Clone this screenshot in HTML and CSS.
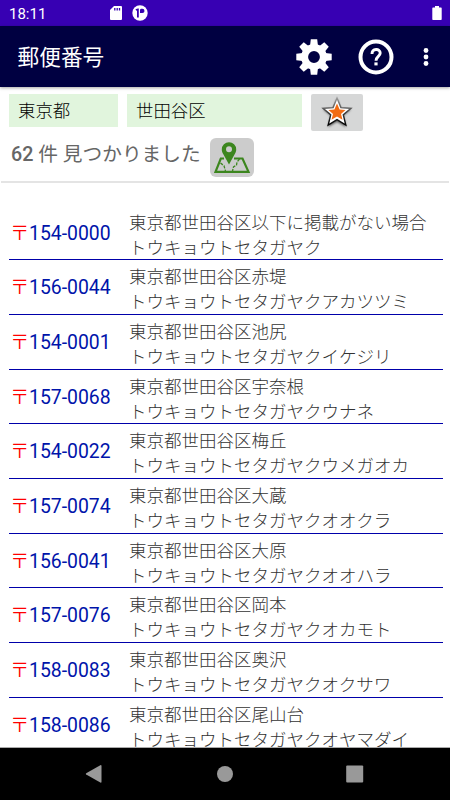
FILE: index.html
```html
<!DOCTYPE html>
<html lang="ja">
<head>
<meta charset="UTF-8">
<meta name="viewport" content="width=device-width, initial-scale=1.0">
<title>郵便番号</title>
<link rel="stylesheet" href="styles.css">
</head>
<body>
    <div class="status-bar">
        <span class="clock">18:11</span>
        <svg class="sd-icon" width="12" height="14" viewBox="0 0 12 14">
            <path d="M4 0H11Q12 0 12 1V13Q12 14 11 14H1Q0 14 0 13V4Z" fill="#fff"/>
            <path d="M4.8 2V4.5M7.2 2V4.5M9.5 2V4.5" stroke="#3700b3" stroke-width="1.3"/>
        </svg>
        <svg class="app-icon" width="16" height="16" viewBox="0 0 16 16">
            <circle cx="8" cy="8" r="7.7" fill="#fff"/>
            <path d="M3.4 4.6Q5 3.4 6.8 3.6V12.6H5V6Q4 5.4 3.4 4.6ZM8 5.2Q8 3.8 9.4 3.8H10.4A2 2 0 0 1 10.4 8H8Z" fill="#3700b3"/>
        </svg>
        <svg class="battery-icon" width="10" height="14" viewBox="0 0 10 14">
            <path d="M3 0H7V1.4H9Q9.7 1.4 9.7 2.2V13.2Q9.7 14 9 14H1Q.3 14 .3 13.2V2.2Q.3 1.4 1 1.4H3Z" fill="#fff"/>
        </svg>
    </div>

    <div class="app-bar">
        <h1>郵便番号</h1>
        <svg class="gear" width="36" height="36" viewBox="-18 -18 36 36">
            <g fill="#fff">
                <path id="tooth" d="M-3.2 -17.7H3.2L4.2 -9H-4.2ZM-3.2 17.7H3.2L4.2 9H-4.2Z"/>
                <use href="#tooth" transform="rotate(45)"/>
                <use href="#tooth" transform="rotate(90)"/>
                <use href="#tooth" transform="rotate(135)"/>
            </g>
            <circle r="9.4" fill="none" stroke="#fff" stroke-width="7"/>
        </svg>
        <svg class="help" width="36" height="36" viewBox="0 0 36 36">
            <circle cx="18" cy="18" r="15.5" fill="none" stroke="#fff" stroke-width="4"/>
            <path d="M14 15C14 9.2 22.2 9.2 22.2 14C22.2 17.5 18 17.3 18 21.8" fill="none" stroke="#fff" stroke-width="2.9"/>
            <path d="M16.4 23.4H19.6V26.4H16.4Z" fill="#fff"/>
        </svg>
        <svg class="more" width="6" height="20" viewBox="0 0 6 20">
            <g fill="#fff"><circle cx="3" cy="3.5" r="2.4"/><circle cx="3" cy="10" r="2.4"/><circle cx="3" cy="16.5" r="2.4"/></g>
        </svg>
    </div>

    <div class="search">
        <div class="field pref">東京都</div>
        <div class="field city">世田谷区</div>
        <div class="star-button">
            <svg width="34" height="34" viewBox="0 0 34 34">
                <defs>
                    <linearGradient id="edge" x1="0" y1="0" x2="0" y2="1">
                        <stop offset="0" stop-color="#999"/>
                        <stop offset=".6" stop-color="#333"/>
                        <stop offset="1" stop-color="#000"/>
                    </linearGradient>
                </defs>
                <path class="star-shadow" d="M17 3L20.9 12.4L31 13.2L23.3 19.8L26 31L17 25.8L8 31L10.7 19.8L3 13.2L13.1 12.4Z"/>
                <path d="M17 2L20.9 11.6L31 12.3L23.3 18.8L25.8 29L17 23.6L8.2 29L10.7 18.8L3 12.3L13.1 11.6Z" fill="#fff" stroke="url(#edge)" stroke-width="1.4"/>
                <path d="M17 7.5L19.6 13.4L25.5 13.9L21 17.9L22.5 23.8L17 20.5L11.5 23.8L13 17.9L8.5 13.9L14.4 13.4Z" fill="#f26b12"/>
            </svg>
        </div>
    </div>

    <div class="result">
        <span class="count"><b>62</b> 件 見つかりました</span>
        <div class="map-button">
            <svg width="44" height="39" viewBox="0 0 44 39">
                <g fill="none" stroke="#3c861e">
                    <path d="M14 20.5H10.8L5.5 33.8H38.5L32.5 20.5H24" stroke-width="2.2"/>
                    <path d="M10.5 25L14 27.8L15.5 33M29.5 21L27 24L26.5 27L23.5 29L22.5 33" stroke-width="1.3" stroke-dasharray="3 1.2"/>
                </g>
                <path fill-rule="evenodd" d="M19 26.5L13.2 16C12.3 14.4 11.8 13 11.8 11.4A7.2 7.2 0 0 1 26.2 11.4C26.2 13 25.7 14.4 24.8 16ZM19 8.3A3 3 0 1 0 19 14.3A3 3 0 1 0 19 8.3Z" fill="#3c861e"/>
            </svg>
        </div>
    </div>

    <div class="list">
        <div class="row"><div class="zip"><span class="mark">〒</span>154-0000</div><div class="address">東京都世田谷区以下に掲載がない場合<br>トウキョウトセタガヤク</div></div>
        <div class="row"><div class="zip"><span class="mark">〒</span>156-0044</div><div class="address">東京都世田谷区赤堤<br>トウキョウトセタガヤクアカツツミ</div></div>
        <div class="row"><div class="zip"><span class="mark">〒</span>154-0001</div><div class="address">東京都世田谷区池尻<br>トウキョウトセタガヤクイケジリ</div></div>
        <div class="row"><div class="zip"><span class="mark">〒</span>157-0068</div><div class="address">東京都世田谷区宇奈根<br>トウキョウトセタガヤクウナネ</div></div>
        <div class="row"><div class="zip"><span class="mark">〒</span>154-0022</div><div class="address">東京都世田谷区梅丘<br>トウキョウトセタガヤクウメガオカ</div></div>
        <div class="row"><div class="zip"><span class="mark">〒</span>157-0074</div><div class="address">東京都世田谷区大蔵<br>トウキョウトセタガヤクオオクラ</div></div>
        <div class="row"><div class="zip"><span class="mark">〒</span>156-0041</div><div class="address">東京都世田谷区大原<br>トウキョウトセタガヤクオオハラ</div></div>
        <div class="row"><div class="zip"><span class="mark">〒</span>157-0076</div><div class="address">東京都世田谷区岡本<br>トウキョウトセタガヤクオカモト</div></div>
        <div class="row"><div class="zip"><span class="mark">〒</span>158-0083</div><div class="address">東京都世田谷区奥沢<br>トウキョウトセタガヤクオクサワ</div></div>
        <div class="row"><div class="zip"><span class="mark">〒</span>158-0086</div><div class="address">東京都世田谷区尾山台<br>トウキョウトセタガヤクオヤマダイ</div></div>
    </div>

    <div class="nav-bar">
        <svg width="18" height="20" viewBox="0 0 18 20"><path d="M1.2 9.2L15.3 1.2Q16.5 .8 16.5 2V17.8Q16.5 19 15.3 18.5L1.2 10.6Q.3 9.9 1.2 9.2Z" fill="#999"/></svg>
        <svg width="18" height="18" viewBox="0 0 18 18"><circle cx="9" cy="9" r="8" fill="#999"/></svg>
        <svg width="18" height="18" viewBox="0 0 18 18"><rect x=".2" y=".5" width="17" height="17" rx="1" fill="#999"/></svg>
    </div>
</body>
</html>
```
FILE: styles.css
```css
* {
    box-sizing: border-box;
}
body {
    margin: 0;
    width: 450px;
    height: 800px;
    display: flex;
    flex-direction: column;
    overflow: hidden;
    background-color: #fff;
    font-family: Roboto, "Noto Sans CJK JP", sans-serif;
}
svg {
    display: block;
    flex: none;
}

/* Top bars */
.status-bar {
    flex: none;
    height: 26px;
    padding: 0 8px 0 9px;
    display: flex;
    align-items: center;
    background-color: #3700b3;
    color: #fff;
}
.clock {
    width: 101px;
    font-size: 15px;
    line-height: 26px;
    padding-top: 1px;
}
.app-icon {
    margin-left: 10px;
}
.battery-icon {
    margin-left: auto;
}
.app-bar {
    flex: none;
    height: 61px;
    padding-left: 17.5px;
    display: flex;
    align-items: center;
    background-color: #000041;
    box-shadow: 0 1px 3px rgba(0, 0, 0, 0.35);
    color: #fff;
}
h1 {
    width: 278.5px;
    margin: 0;
    padding-top: 2px;
    font-size: 21.7px;
    line-height: 30px;
    font-weight: 400;
}
.help {
    margin-left: 26px;
}
.more {
    margin-left: 29px;
}

/* Search fields */
.search {
    flex: none;
    height: 44px;
    padding: 7px 9px 0;
    display: flex;
    gap: 9px;
}
.field {
    height: 33px;
    padding-left: 9px;
    background-color: #e1f5dd;
    color: #000;
    font-size: 17.4px;
    line-height: 34px;
    font-weight: 300;
}
.pref {
    width: 109px;
}
.city {
    width: 175px;
}
.star-button {
    width: 52px;
    height: 37px;
    display: flex;
    justify-content: center;
    align-items: center;
    border-radius: 2px;
    background-color: #d6d7d7;
}
.star-shadow {
    fill: #555;
    filter: blur(1px);
}
.result {
    flex: none;
    height: 52px;
    margin: 0 1px;
    padding: 7px 0 0 10px;
    display: flex;
    border-bottom: 2px solid #e4e4e4;
    color: #666;
}
.count {
    width: 199px;
    font-size: 19.7px;
    line-height: 34px;
    white-space: nowrap;
}
.count b {
    font-weight: 500;
}
.map-button {
    width: 44px;
    height: 39px;
    border-radius: 6px;
    background-color: #ccc;
}

/* Result list */
.list {
    flex: 1;
    min-height: 0;
    overflow: hidden;
    padding: 22.6px 7px 0 9px;
    border-bottom: 1px solid #aaa;
}
.row {
    height: 54.7px;
    display: flex;
    border-bottom: 1px solid #0000aa;
}
.zip {
    width: 120px;
    padding-left: 1px;
    display: flex;
    color: #0014aa;
    font-size: 19.4px;
    line-height: 56px;
}
.mark {
    width: 19px;
    color: #f00;
    font-size: 19.4px;
    font-weight: 300;
}
.address {
    padding-top: 3px;
    color: #333;
    font-family: "Noto Sans CJK JP", sans-serif;
    font-size: 17.5px;
    line-height: 25px;
    font-weight: 300;
    white-space: nowrap;
}

/* System navigation */
.nav-bar {
    flex: none;
    height: 52px;
    padding-left: 85px;
    display: flex;
    align-items: center;
    gap: 112.6px;
    background-color: #000;
}
```
